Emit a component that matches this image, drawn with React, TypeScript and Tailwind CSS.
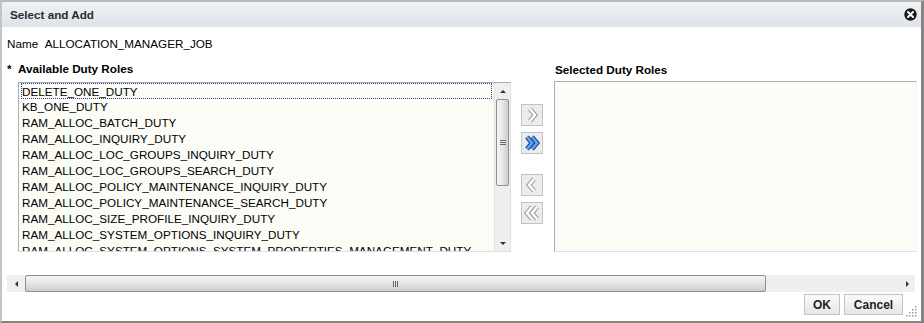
import React from "react"

// Roles que se muestran en la lista de la izquierda
const availableRoles = [
  "DELETE_ONE_DUTY",
  "KB_ONE_DUTY",
  "RAM_ALLOC_BATCH_DUTY",
  "RAM_ALLOC_INQUIRY_DUTY",
  "RAM_ALLOC_LOC_GROUPS_INQUIRY_DUTY",
  "RAM_ALLOC_LOC_GROUPS_SEARCH_DUTY",
  "RAM_ALLOC_POLICY_MAINTENANCE_INQUIRY_DUTY",
  "RAM_ALLOC_POLICY_MAINTENANCE_SEARCH_DUTY",
  "RAM_ALLOC_SIZE_PROFILE_INQUIRY_DUTY",
  "RAM_ALLOC_SYSTEM_OPTIONS_INQUIRY_DUTY",
  "RAM_ALLOC_SYSTEM_OPTIONS_SYSTEM_PROPERTIES_MANAGEMENT_DUTY",
]

function ShuttleButton({ dir, double, active }: { dir: "right" | "left"; double?: boolean; active?: boolean }) {
  const outer = active ? "#1d4f9e" : "#a3a3a3"
  const inner = active ? "#5fa8ee" : "#ffffff"
  const shapes =
    dir === "right"
      ? double
        ? ["6,5 11,11 6,17", "11,5 16,11 11,17"]
        : ["9,5 14,11 9,17"]
      : double
        ? ["11,5 6,11 11,17", "16,5 11,11 16,17"]
        : ["13,5 8,11 13,17"]
  return (
    <div className="w-[22px] h-[22px] border border-[#c3c3c3] bg-[#ececec]">
      <svg width="20" height="20" viewBox="1 1 20 20">
        {shapes.map((p) => (
          <polyline key={p + "o"} points={p} fill="none" stroke={outer} strokeWidth="4.8" strokeLinejoin="miter" />
        ))}
        {shapes.map((p) => (
          <polyline key={p + "i"} points={p} fill="none" stroke={inner} strokeWidth="2.4" strokeLinejoin="miter" />
        ))}
      </svg>
    </div>
  )
}

function CloseIcon() {
  return (
    <svg width="13" height="13" viewBox="0 0 13 13">
      <circle cx="6.5" cy="6.5" r="6.2" fill="#1a1a1a" />
      <path d="M4 4 L9 9 M9 4 L4 9" stroke="#ffffff" strokeWidth="2" strokeLinecap="round" />
    </svg>
  )
}

function ResizeGrip() {
  const dots = [
    [9, 1],
    [6, 4],
    [9, 4],
    [3, 7],
    [6, 7],
    [9, 7],
    [0, 10],
    [3, 10],
    [6, 10],
    [9, 10],
  ]
  return (
    <svg width="11" height="12" viewBox="0 0 11 12">
      {dots.map(([x, y]) => (
        <rect key={`${x}-${y}`} x={x} y={y} width="1.5" height="1.5" fill="#9a9a9a" />
      ))}
    </svg>
  )
}

export default function App() {
  return (
    <div className="w-[924px] h-[323px] font-['Liberation_Sans',Arial,sans-serif] text-[11.7px] text-black">
      <div className="h-full flex flex-col bg-white border-l-2 border-t-2 border-l-[#c4c4c4] border-t-[#b9b9b9] border-r-[3px] border-b-2 border-r-[#858585] border-b-[#858585]">
        {/* barra de titulo */}
        <div className="h-[25px] flex items-center justify-between pl-[8px] pr-[4px] bg-gradient-to-b from-[#eff2f5] to-[#dce3ea]">
          <span className="font-bold text-[#2b2b2b]">Select and Add</span>
          <CloseIcon />
        </div>

        <div className="mt-[10px] pl-[5px] leading-[14px]">
          Name&nbsp;&nbsp;ALLOCATION_MANAGER_JOB
        </div>

        <div className="mt-[11px] flex pl-[5px]">
          <span className="w-[11px] leading-[14px] font-bold">*</span>

          {/* lista disponible */}
          <div className="w-[493px] flex flex-col">
            <div className="leading-[14px] font-bold">Available Duty Roles</div>
            <div className="mt-[6px] h-[170px] flex border border-[#a9aeb5] border-b-[#dde0e4] border-r-[#dde0e4] bg-[#fcfcf7] overflow-hidden">
              <div className="flex-1 min-w-0 overflow-hidden pl-[2px] whitespace-nowrap">
                {availableRoles.map((role, i) => (
                  <div
                    key={role}
                    className={
                      i === 0
                        ? "h-[16px] leading-[15px] border border-dotted border-[#23408e] mr-[2px]"
                        : "h-[16px] leading-[16px] pl-[1px]"
                    }
                  >
                    {role}
                  </div>
                ))}
              </div>
              {/* scroll vertical */}
              <div className="w-[16px] flex flex-col bg-[#efefef] border-l border-[#e2e2e2]">
                <div className="h-[16px] flex items-center justify-center">
                  <div className="w-0 h-0 border-l-[3px] border-r-[3px] border-b-[3px] border-l-transparent border-r-transparent border-b-[#333]" />
                </div>
                <div className="h-[87px] mx-[1px] rounded-[2px] border border-[#8f8f8f] bg-gradient-to-r from-[#f6f6f6] via-[#e6e6e6] to-[#cfcfcf] flex flex-col items-center justify-center gap-[1px]">
                  <div className="w-[6px] h-px bg-[#666]" />
                  <div className="w-[6px] h-px bg-[#666]" />
                  <div className="w-[6px] h-px bg-[#666]" />
                </div>
                <div className="flex-1" />
                <div className="h-[16px] flex items-center justify-center">
                  <div className="w-0 h-0 border-l-[3px] border-r-[3px] border-t-[3px] border-l-transparent border-r-transparent border-t-[#333]" />
                </div>
              </div>
            </div>
          </div>

          {/* botones de traslado */}
          <div className="ml-[10px] w-[22px] pt-[42px] flex flex-col">
            <ShuttleButton dir="right" />
            <div className="mt-[6px]">
              <ShuttleButton dir="right" double active />
            </div>
            <div className="mt-[20px]">
              <ShuttleButton dir="left" />
            </div>
            <div className="mt-[6px]">
              <ShuttleButton dir="left" double />
            </div>
          </div>

          {/* lista seleccionada */}
          <div className="ml-[11px] w-[363px] flex flex-col">
            <div className="pl-px mt-px leading-[14px] font-bold">Selected Duty Roles</div>
            <div className="mt-[4px] h-[171px] border border-[#a9aeb5] border-b-[#dde0e4] border-r-[#f4f4f4] bg-[#fcfcf7]" />
          </div>
        </div>

        {/* scroll horizontal */}
        <div className="mt-[23px] ml-[5px] w-[908px] h-[17px] flex bg-[#efefef]">
          <div className="w-[18px] flex items-center justify-center">
            <div className="w-0 h-0 border-t-[3px] border-b-[3px] border-r-[3px] border-t-transparent border-b-transparent border-r-[#333]" />
          </div>
          <div className="w-[741px] rounded-[2px] border border-[#8f8f8f] bg-gradient-to-b from-[#f5f5f5] via-[#e4e4e4] to-[#cdcdcd] flex items-center justify-center gap-[1px]">
            <div className="w-px h-[6px] bg-[#666]" />
            <div className="w-px h-[6px] bg-[#666]" />
            <div className="w-px h-[6px] bg-[#666]" />
          </div>
          <div className="flex-1" />
          <div className="w-[16px] flex items-center justify-center">
            <div className="w-0 h-0 border-t-[3px] border-b-[3px] border-l-[3px] border-t-transparent border-b-transparent border-l-[#333]" />
          </div>
        </div>

        {/* pie con botones */}
        <div className="mt-[2px] flex items-end justify-end pr-[4px]">
          <button className="w-[36px] h-[21px] border border-[#c3c3c3] bg-gradient-to-b from-[#fafafa] to-[#e6e6e6] font-bold text-[12px] text-[#1f1f1f]">
            OK
          </button>
          <button className="ml-[4px] w-[59px] h-[21px] border border-[#c3c3c3] bg-gradient-to-b from-[#fafafa] to-[#e6e6e6] font-bold text-[12px] text-[#1f1f1f]">
            Cancel
          </button>
          <div className="ml-[3px] mb-[-2px]">
            <ResizeGrip />
          </div>
        </div>
      </div>
    </div>
  )
}
